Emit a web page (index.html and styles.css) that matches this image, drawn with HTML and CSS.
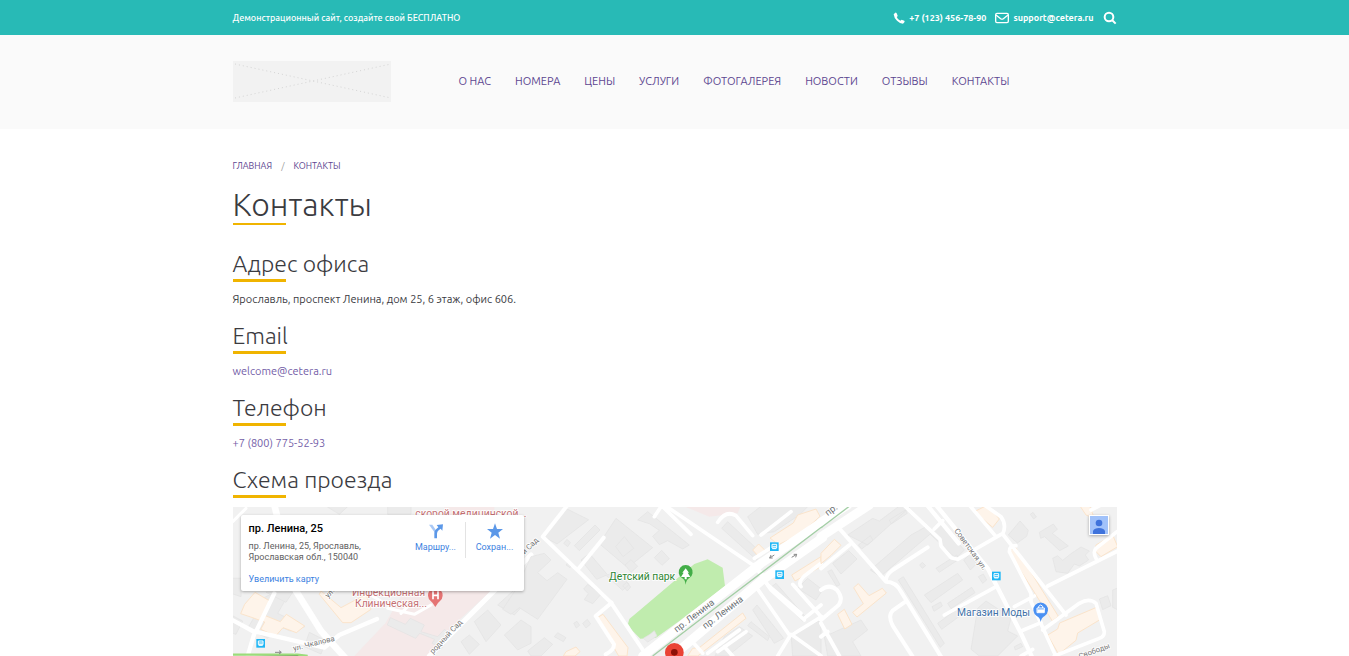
FILE: index.html
```html
<!DOCTYPE html>
<html lang="ru">
<head>
<meta charset="utf-8">
<meta name="viewport" content="width=device-width, initial-scale=1">
<title>Контакты</title>
<link rel="stylesheet" href="styles.css">
</head>
<body>
<div class="topbar">
  <div class="container topbar-row">
    <span>Демонстрационный сайт, создайте свой БЕСПЛАТНО</span>
    <div class="topbar-contacts">
      <a href="tel:+71234567890"><svg width="12" height="12" viewBox="0 0 36 36" fill="currentColor"><path d="M2 7 7 2Q9 1 11 4l3 7q0 2-3 4 3 8 11 11l4-3 8 3q2 2 0 5l-4 4q-9 0-18-9Q3 18 2 7z"/></svg>+7 (123) 456-78-90</a>
      <a href="mailto:support@cetera.ru"><svg width="14" height="12" viewBox="0 0 42 36" fill="none" stroke="currentColor" stroke-width="4"><rect x="2" y="4" width="38" height="28" rx="4"/><path d="m3 9 14 11q4 3 8 0L39 9"/></svg>support@cetera.ru</a>
      <button class="search" type="button" aria-label="Поиск"><svg width="14" height="14" viewBox="0 0 42 42" fill="none" stroke="currentColor" stroke-width="6"><circle cx="18" cy="18" r="13"/><path d="m27 27 11 11"/></svg></button>
    </div>
  </div>
</div>
<header class="header">
  <div class="container header-row">
    <a href="#" class="logo" aria-label="Главная"><svg viewBox="0 0 158 41" preserveAspectRatio="none"><path d="m2 3 156 34M2 37 158 3" fill="none" stroke="#d5d5d5" stroke-dasharray="1 3"/></svg></a>
    <nav class="nav">
      <a href="#">О НАС</a><a href="#">НОМЕРА</a><a href="#">ЦЕНЫ</a><a href="#">УСЛУГИ</a><a href="#">ФОТОГАЛЕРЕЯ</a><a href="#">НОВОСТИ</a><a href="#">ОТЗЫВЫ</a><a href="#">КОНТАКТЫ</a>
    </nav>
  </div>
</header>
<main class="container main">
  <nav class="breadcrumbs"><a href="#">ГЛАВНАЯ</a><span>/</span><a href="#">КОНТАКТЫ</a></nav>
  <h1>Контакты</h1>
  <h2>Адрес офиса</h2>
  <p>Ярославль, проспект Ленина, дом 25, 6 этаж, офис 606.</p>
  <h2>Email</h2>
  <p><a href="mailto:welcome@cetera.ru">welcome@cetera.ru</a></p>
  <h2>Телефон</h2>
  <p><a href="tel:+78007755293">+7 (800) 775-52-93</a></p>
  <h2>Схема проезда</h2>
  <section class="map" aria-label="Карта">
    <svg class="map-canvas" viewBox="0 0 2652 447" preserveAspectRatio="xMinYMin slice">
      <!-- western blocks -->
      <g transform="translate(-6 -6)">
        <path class="pink" d="M463 355 520 258H780L690 340 590 453H370z"/>
        <path class="pink" d="M640 0h150v40H640z"/>
        <g class="bld">
          <path d="M80 288 130 262 165 282 140 325 222 365 178 378 130 358 110 400 50 370 85 310z"/>
          <path d="m0 330 35 18-20 40-15-5zM105 262l60 30 20-30zM0 220h30v55l-30-10z"/>
          <path d="m478 338 45 20 15-18 42 20-10 20 50 15 20-22 18 12-25 45-30-15 8-12-45-18-12 15-85-40z"/>
          <path d="m730 350 40-35 40 45-45 50zM800 300l60-55 40 30-50 55zM690 410l25-20 30 28-30 30z"/>
          <path d="m235 382 50 25-15 40-50-22zM820 390l50-45 30 20v50l-40 20zM280 0h75l-30 28zM470 0h70v28h-70z"/>
        </g>
        <g class="shop">
          <path d="m72 262 48 28-22 40 50 20 18-22 55 35-25 20-40-15-22 25-45-20 12-22-42-15-30-10 12-28zM270 258l60 50 75-40 15 45-60 40-25 0-70-85z"/>
        </g>
        <g class="road">
          <path stroke-width="20" d="m130 0 65 258 75 120 90 100"/>
          <path stroke-width="13" d="M0 343 65 378 280 428 325 390 438 342M75 380l55-115M70 385 50 453"/>
          <path stroke-width="9" d="m5 50 40-40M395 255l65 40M470 310l80 18 50-28M510 325l20-20"/>
          <path stroke-width="15" d="M595 453 785 262 900 150"/>
        </g>
        <path d="M0 449h200l30 4" stroke="#9bdc7a" stroke-width="7"/>
        <path d="m132 442 18 0m-6-5 7 5-7 5" class="arrow"/>
      </g>
      <!-- park and central avenue -->
      <g transform="translate(864 -6)">
        <path class="pink" d="M480 0h180l-10 25-85 10z"/>
        <g class="bld">
          <path d="m138 12 65 32-95 73-45-25zM222 60l15 15-62 62-15-15zM285 40l110 88-75 60-85-72zM310 95l28 35-32 25-22-30z"/>
          <path d="m350 45 30-25 125 100-20 12-45-25-25 12-20-25 20-18-30-20zM400 158l22-22 23 25-22 20zM30 155l40-10 20 20-40 38 28 24 32-24 28 20-88 120-55-35-25 20-25-15 40-60z"/>
          <path d="m180 165 25-20 55 65 25-12 40 40-20 18-50-45-28 12zM200 238l40 30-25 28-25-12 12-18-14-14zM312 180l18-16 20 20-20 18zM305 242l12-10 12 14-10 12zM128 115l10-12 10 10-8 12zM143 170l10 10-6 8-12-8z"/>
          <path d="m100 395 10-12 25 15-8 12zM158 355l10-6 8 12-10 8zM185 355l14-12 10 14-14 12zM620 50l102 95-15 20-105-95zM680 35l45-35h140l-30 30-75 50-50 8z"/>
          <path d="m708 300 80 100-28 15-65-100zM745 250l20-15 92 105-12 8zM690 350l55 45-5 12-60-45zM610 395l45-30 40 28-75 60h-38zM810 385l90-40v108h-85zM20 438l50-40 25 20-35 35H30zM830 250l30-30 45 35-20 30z"/>
        </g>
        <g class="shop">
          <path d="m228 338 18-10 75 100-3 25h-25zM135 440l30-14 12 14-15 13h-35zM830 30l55-18 12 22-60 55-65 30-25-20 70-45zM812 210l88-55v30l-78 43zM695 135l18-18 18 18-18 20zM515 430l20-2 130-104 10 16-145 113h-30z"/>
        </g>
        <path d="M325 342q30-25 195-165l40-14 45 25 7 55-137 105-70 50-47 3-25-25-12-20z" fill="#c0ecae"/>
        <path class="bld" d="m367 400 20-12 13-11 8 16-28 18z"/>
        <g class="road">
          <path stroke-width="12" d="M140 0 65 95 270 293 378 453M175 188l73-90M272 293l-48 40 55 85q0 18-25 30"/>
          <path stroke-width="11" d="m420 0 90 88M420 5l-20 30M420 0h10l280 190 30 50 100 85M590 52q25-38 55-20l50 60M700 160l70-45M720 90l90-70"/>
          <path stroke-width="11" d="m705 245 100 145M730 225l20 30 100 90M815 238l88 100M840 245q-10-12 10-32l50-38M812 390l90-55M770 453l40-65 90 64M850 340l50-40M505 400l40 45M590 440l85-60M610 425l25 28M560 445l95-70"/>
          <path stroke-width="27" d="M365 453 720 175 905 50M455 453l265-225 185-130"/>
          <path stroke-width="14" d="m700 180 35 45"/>
        </g>
        <path d="M395 453 610 288 905 64" stroke="#a3cea5" stroke-width="4" fill="none"/>
        <path class="arrow" d="m760 150-14 9m4-9-4 9 9 0M812 157l15-9m-9 0h9l-3 9"/>
      </g>
      <!-- eastern blocks -->
      <g transform="translate(1764 -6)">
        <g class="bld">
          <path d="m80 90 75-50 20 8 60-45h35L140 120zM112 120l36-28 8 14-34 26zM148 195 270 90l45-25 15 20-152 130zM205 45l48-30 6 10-48 32z"/>
          <path d="m35 175 48-38 25 25-48 45zM20 200l12-6 25 45-10 5zM232 225l15-10 123 200-12 12zM328 88l30-33 72 80-25 25zM296 180l8-8 10 10-10 8zM310 270l100-65 15 20-95 68zM345 190l62-40 8 12-60 40z"/>
          <path d="m380 295 72-48 10 16-72 48zM333 305l26-14 5 12-25 16zM350 355l75-55 12 18-75 55zM428 165l20-18 18 30-18 18zM472 215l15-8 10 18-12 10zM562 90l35-42 25 28-5 18-28 20z"/>
          <path d="m655 82 42-25 12 16-15 12 48 38-26 14-45-42-12 5zM695 160l15-8 15 14 25-20 30-20 25 12-12 12 10 15-28 18-15-6-20 28-35-5zM628 28l8-6 10 14-8 6z"/>
          <path d="m470 310 25-22 75 50-10 40 30 15-60 60h-55l-25-20zM10 395l110-50 20 30-45 35 25 43H20zM580 425l20-10 5 10-22 10zM835 282l25-10 10 30-25 12zM875 255l20-8v70l-20-10z"/>
        </g>
        <g class="shop">
          <path d="m0 145 40-42 20 18-30 30-30 25zM50 328l20-15 23 45-22 14zM98 248l14-12 32 36 40-22 12 14-88 72-13-14 32-26zM460 20 500 0l35 42-20 25zM562 138l22-10 128 206-18 14zM680 390l30-18 6-18 113-48 8 38-67 40-5 22-52 42zM775 0h30l15 40-25-10zM825 120l50-30 15 35-50 30-18-18z"/>
        </g>
        <g class="road">
          <path stroke-width="27" d="M0 95 145 0M0 52 80 0"/>
          <path stroke-width="12" d="m50 65 145 165q30 0 45 30l120 195M0 190l85-70M195 225q0-15 20-30l105-68M0 255q25-20 48 0 20 25 5 45L0 345M250 292l-35 25q-15 15 0 45l60 93M0 355l55 98M0 395l20-15"/>
          <path stroke-width="13" d="m345 0 155 190 100 195 35 75M318 0l95 115"/>
          <path stroke-width="11" d="M248 0 357 103l3 20 30 35 20 5 130-75M340 72l25-25M445 0l80 95M490 0l50 35q18 25 5 52L735 330M630 290V265l-65-125q0-18 20-18M370 330l150-82M580 305l60-32M630 290l75 165M600 378l60-25M665 375l110-80q30-18 50 0l25 85q0 15-15 20L700 453M680 243l210-105M825 160q-10-20 0-30l63-50M840 0l-30 15M600 453l35-20"/>
        </g>
        <path d="M0 68 90 0" stroke="#a3cea5" stroke-width="4" fill="none"/>
      </g>
      <!-- transit stops -->
      <g class="stop">
        <g transform="translate(70 396)"><rect width="26" height="26"/><path d="M6 6h14v11H6zM7 19h12M7 12h12"/></g>
        <g transform="translate(1611 106)"><rect width="26" height="26"/><path d="M6 6h14v11H6zM7 19h12M7 12h12"/></g>
        <g transform="translate(1627 190)"><rect width="26" height="26"/><path d="M6 6h14v11H6zM7 19h12M7 12h12"/></g>
        <g transform="translate(2277 194)"><rect width="26" height="26"/><path d="M6 6h14v11H6zM7 19h12M7 12h12"/></g>
      </g>
      <!-- labels -->
      <g class="lbl med"><text x="547" y="29">скорой медицинской...</text><text x="357" y="268">Инфекционная</text><text x="366" y="299">Клиническая...</text></g>
      <g class="lbl street">
        <text transform="translate(182 432) rotate(-14)">ул. Чкалова</text>
        <text transform="translate(285 274) rotate(-45)">ул.</text>
        <text transform="translate(600 442) rotate(-47)">родный Сад</text>
        <text transform="translate(852 165) rotate(-44)">ный Сад</text>
        <text transform="translate(2163 71) rotate(54)">Советская ул.</text>
        <text transform="translate(2540 456) rotate(-20)">Свободы</text>
      </g>
      <g class="lbl avenue">
        <text transform="translate(1331 377) rotate(-37)">пр. Ленина</text>
        <text transform="translate(1417 367) rotate(-37)">пр. Ленина</text>
        <text transform="translate(1784 28) rotate(-37)">пр.</text>
      </g>
      <text class="lbl park" x="1128" y="219">Детский парк</text>
      <text class="lbl fashion" x="2172" y="327">Магазин Моды</text>
      <!-- place markers -->
      <path d="M607 300Q600 287 593 282a22 22 0 1 1 28 0q-7 5-14 18z" fill="#e57373"/>
      <path d="M600 253v24m15-24v24m-15-12h15" stroke="#fff" stroke-width="5"/>
      <path d="M1358 233q-2-16-11-20a21 21 0 1 1 22 0q-9 4-11 20z" fill="#43ad48"/>
      <path d="m1358 184-10 13h4l-8 13h11v7h6v-7h11l-8-13h4z" fill="#fff"/>
      <path d="M2423 345q-2-13-12-18a22 22 0 1 1 24 0q-10 5-12 18z" fill="#4b91f3"/>
      <path d="M2412 303h22v14h-22zm5 0v-5q6-8 12 0v5" stroke="#fff" stroke-width="3" fill="none"/><path d="M2413 307h20v9h-20z" fill="#fff"/>
      <path d="M1296 436a28 28 0 0 1 56 0q0 14-16 36h-24q-16-22-16-36z" fill="#ea4335"/><circle cx="1324" cy="436" r="10" fill="#8d1007"/>
    </svg>
    <div class="place-card">
      <div class="place-info">
        <strong>пр. Ленина, 25</strong>
        <address>пр. Ленина, 25, Ярославль, Ярославская обл., 150040</address>
        <a href="#">Увеличить карту</a>
      </div>
      <a class="place-action" href="#"><svg width="16" height="16" viewBox="0 0 48 48"><path d="M3 5h10l10 15v12z" fill="#a9c8f5"/><path d="M19 46V30q0-7 6-12l6-5-5-7 19-2-2 19-5-6-6 5q-5 4-5 10v14z" fill="#5c98e8"/></svg>Маршру...</a>
      <a class="place-action" href="#"><svg width="16" height="16" viewBox="0 0 48 48"><path d="m24 1 6 17h18L34 29l5 18-15-11L9 47l5-18L0 18h18z" fill="#5c98e8"/></svg>Сохран...</a>
    </div>
    <button class="account" type="button" aria-label="Аккаунт"><svg width="18" height="18" viewBox="0 0 54 54"><path fill="#a1c2fa" d="M0 0h54v54H0z"/><circle cx="27" cy="21" r="10" fill="#3f73dc"/><path d="M9 54V44q5-8 18-8t18 8v10z" fill="#3f73dc"/></svg></button>
  </section>
</main>
</body>
</html>
```
FILE: styles.css
```css
* { box-sizing: border-box; }
body {
  margin: 0;
  min-height: 100vh;
  display: flex;
  flex-direction: column;
  background: #fff;
  color: #3b3b3f;
  font: 11px/16px Ubuntu, "Noto Sans", sans-serif;
}
a { color: #7460a8; text-decoration: none; }
svg { display: block; flex: none; }
button { border: 0; padding: 0; background: none; color: inherit; cursor: pointer; }
.container { width: 100%; max-width: 884px; margin: 0 auto; }

.topbar { background: #28bab6; color: #fff; font-size: 9px; font-weight: 500; }
.topbar a { color: #fff; font-weight: 600; }
.topbar-row { display: flex; align-items: center; justify-content: space-between; min-height: 35px; }
.topbar-contacts { display: flex; align-items: center; gap: 9px; }
.topbar-contacts a { display: flex; align-items: center; gap: 4px; }

.header { background: #fafafa; }
.header-row { display: flex; align-items: center; gap: 68px; padding: 25px 0 27px; min-height: 94px; }
.logo { flex: none; width: 158px; height: 41px; background: #f2f2f2; }
.logo svg { width: 100%; height: 100%; }
.nav { display: flex; gap: 24px; white-space: nowrap; }
.nav a { color: #5c4690; }

.main { flex: 1; display: flex; flex-direction: column; padding-top: 29px; }
.breadcrumbs { display: flex; gap: 9px; font-size: 9px; color: #999; }
.breadcrumbs a { color: #5c4690; }
h1, h2 { margin: 0; font-weight: 300; }
h1::after, h2::after { content: ""; display: block; width: 53px; height: 3px; background: #f0b400; }
h1 { font-size: 32px; line-height: 40px; margin: 10px 0 24px; }
h1::after { margin-top: -1px; height: 2px; }
h2 { font-size: 23px; line-height: 30px; }
p { margin: 9px 0 14px; }

.map { position: relative; flex: 1; min-height: 149px; margin-top: 9px; overflow: hidden; background: #f1f1f1; font-family: Roboto, sans-serif; }
.map-canvas { position: absolute; inset: 0; width: 100%; height: 100%; }
.road { fill: none; stroke: #fff; stroke-linecap: round; stroke-linejoin: round; }
.bld { fill: #ebebeb; stroke: #e2e2e2; stroke-width: 2; }
.shop { fill: #fef4ea; stroke: #fbe4cb; stroke-width: 3; }
.pink { fill: #f5e9e9; }
.arrow { fill: none; stroke: #888; stroke-width: 3; }
.stop rect { fill: #1fb6f5; }
.stop path { fill: none; stroke: #fff; stroke-width: 3; }
.lbl { stroke: #fff; stroke-width: 5; paint-order: stroke; font-size: 31px; }
.med { fill: #c56f72; }
.street { fill: #757575; font-size: 23px; }
.avenue { fill: #6b6f73; font-size: 28px; }
.park { fill: #2e8533; }
.fashion { fill: #4272a8; }

.place-card { position: absolute; top: 8px; left: 8px; width: 283px; min-height: 76px; display: flex; padding: 7px 0 5px 8px; background: #fff; border-radius: 2px; box-shadow: 0 1px 3px rgba(0,0,0,.3); font-size: 9px; line-height: 11px; }
.place-card a { color: #3d82df; }
.place-info { width: 158px; padding-right: 34px; }
.place-info strong { display: block; font-size: 11px; line-height: 14px; font-weight: 500; color: #000; }
.place-info address { margin: 5px 0 11px; font-style: normal; color: #616161; }
.place-action { flex: 1; height: 36px; display: flex; flex-direction: column; align-items: center; gap: 3px; padding-top: 1px; }
.place-action + .place-action { border-left: 1px solid #e3e3e3; }
.account { position: absolute; top: 8px; right: 8px; padding: 1px; background: #fff; box-shadow: 0 1px 3px rgba(0,0,0,.3); }
```
